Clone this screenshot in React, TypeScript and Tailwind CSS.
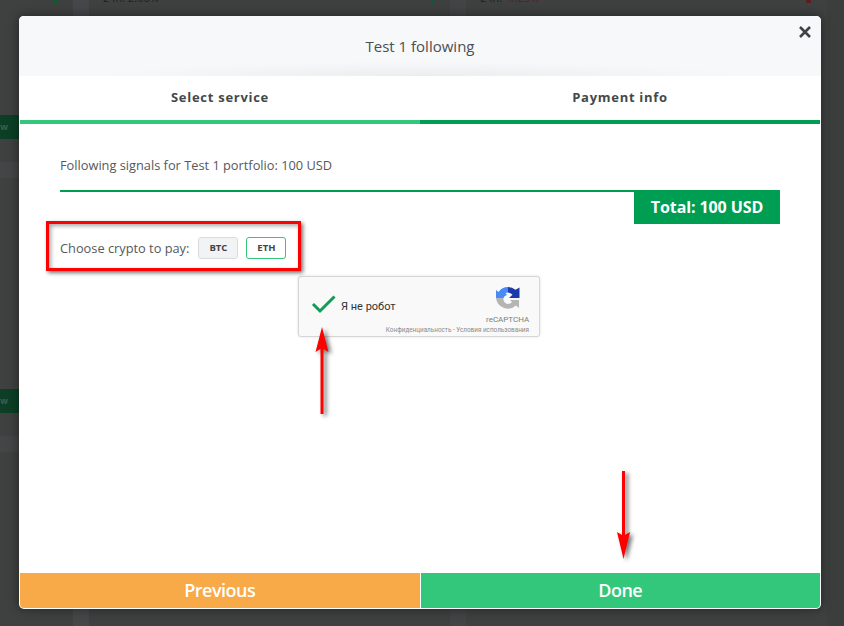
export default function App() {
  const font = { fontFamily: '"Open Sans", sans-serif' };
  return (
    <div className="relative h-[626px] w-[844px] overflow-hidden bg-[#3f4040]" style={font}>
      {/* dimmed page behind the modal */}
      <div className="absolute inset-0">
        <div className="absolute right-0 top-0 h-full w-[17px] bg-[#3c3d3d]" />
        <div className="absolute left-[73px] top-0 h-[16px] w-[16px] bg-[#454748]" />
        <div className="absolute left-[73px] bottom-0 h-[17px] w-[16px] bg-[#454748]" />
        <div className="absolute left-[450px] top-0 h-[16px] w-[16px] bg-[#434445]" />
        <div className="absolute left-[450px] bottom-0 h-[17px] w-[16px] bg-[#434445]" />
        <div className="absolute left-[103px] top-[-10px] text-[11px] text-[#202121]">24h: 2.06%</div>
        <div className="absolute left-[480px] top-[-10px] text-[11px] text-[#202121]">24h: <span className="text-[#5a1f1f]">-0.25%</span></div>
        <div className="absolute left-[54px] top-0 h-[3px] w-[3px] bg-[#0f5a30]" />
        <div className="absolute left-[431px] top-0 h-[3px] w-[3px] bg-[#0f5a30]" />
        <div className="absolute left-[806px] top-0 h-[3px] w-[5px] bg-[#5a1f1f]" />
        <div className="absolute left-0 top-[115px] flex h-[24px] w-[19px] items-center justify-end bg-[#0c3f25] pr-[11px] text-[9px] font-bold text-[#3f5f52]">w</div>
        <div className="absolute left-0 top-[389px] flex h-[24px] w-[19px] items-center justify-end bg-[#0c3f25] pr-[11px] text-[9px] font-bold text-[#3f5f52]">w</div>
        <div className="absolute left-0 top-[162px] h-[16px] w-[19px] bg-[#434546]" />
        <div className="absolute left-0 top-[436px] h-[16px] w-[19px] bg-[#434546]" />
      </div>

      {/* modal */}
      <div className="absolute left-[19px] top-[16px] flex h-[593px] w-[802px] flex-col overflow-hidden rounded-[5px] bg-white shadow-[0_0_12px_rgba(0,0,0,0.45)]">
        <div className="relative flex h-[60px] shrink-0 items-center justify-center bg-[#f7f8fa] bg-[radial-gradient(ellipse_320px_14px_at_50%_100%,#eceded,#f7f8fa)] text-[15px] text-[#4a4f52]">
          Test 1 following
          <svg className="absolute right-[9px] top-[9px]" width="14" height="14" viewBox="0 0 14 14">
            <path d="M2 2 L12 12 M12 2 L2 12" stroke="#3d4345" strokeWidth="2.6" />
          </svg>
        </div>

        <div className="flex h-[48px] shrink-0 pl-px pr-px">
          <div className="flex flex-1 flex-col">
            <div className="flex flex-1 items-center justify-center text-[13px] font-bold tracking-[0.72px] text-[#43494b]">Select service</div>
            <div className="h-[4px] bg-[#32c77b]" />
          </div>
          <div className="flex flex-1 flex-col">
            <div className="flex flex-1 items-center justify-center text-[13px] font-bold tracking-[0.72px] text-[#43494b]">Payment info</div>
            <div className="h-[4px] bg-[#009e52]" />
          </div>
        </div>

        <div className="flex min-h-0 flex-1 flex-col px-[41px]">
          <div className="mt-[32px] text-[12.8px] leading-[18px] text-[#55595c]">Following signals for Test 1 portfolio: 100 USD</div>
          <div className="mt-[16px] flex h-[34px] items-start justify-end border-t-2 border-[#009e52]">
            <div className="-mt-[2px] flex h-[34px] w-[146px] items-center justify-center bg-[#009e52] text-[16px] font-bold tracking-[-0.1px] text-white">Total: 100 USD</div>
          </div>
          <div className="mt-[12px] flex h-[24px] items-center">
            <span className="pt-[1px] text-[12.8px] text-[#55595c]">Choose crypto to pay:</span>
            <span className="ml-[9px] flex h-[22px] w-[40px] items-center justify-center rounded-[3px] border border-[#d9dbde] bg-[#f2f3f5] text-[9.5px] font-bold text-[#3f4548]">BTC</span>
            <span className="ml-[8px] flex h-[22px] w-[40px] items-center justify-center rounded-[3px] border border-[#32c77b] bg-white text-[9.5px] font-bold text-[#3f4548]">ETH</span>
          </div>
          <div className="relative ml-[238px] mt-[16px] h-[61px] w-[242px] rounded-[3px] border border-[#d6d6d6] bg-[#f9f9f9] shadow-[0_0_3px_rgba(0,0,0,0.12)]" style={{ fontFamily: 'Roboto, sans-serif' }}>
            <svg className="absolute left-[12px] top-[17px]" width="26" height="20" viewBox="0 0 26 20">
              <path d="M2 10 L9 17 L23.5 2.5" fill="none" stroke="#0f9d58" strokeWidth="3" />
            </svg>
            <span className="absolute left-[42px] top-[23px] text-[11px] leading-[14px] text-[#333]">Я не робот</span>
            <svg className="absolute left-[196px] top-[9px]" width="26" height="25" viewBox="0 0 26 25">
              <path d="M1 12 L1 4 L3.5 6 A12 12 0 0 1 13 1 L13 6.5 L10.5 7 L12 9 A4.5 4.5 0 0 0 8.5 12 Z" fill="#4a8af4" />
              <path d="M13 1 A12 12 0 0 1 20.5 3.8 L24.5 1.5 L24.5 12 L14 12 L17.5 8.8 A6 6 0 0 0 13 6.5 Z" fill="#1c3aa9" />
              <path d="M1 12 L8.5 12 A5 5 0 0 0 13 18 A5 5 0 0 0 17 16 L15 14 L24 14 L24 22 L21 19.5 A12 12 0 0 1 1 12 Z" fill="#b5b5b5" />
            </svg>
            <span className="absolute left-[187px] top-[37px] text-[8px] leading-[11px] text-[#7d7d7d]">reCAPTCHA</span>
            <span className="absolute right-[10px] top-[49px] whitespace-nowrap text-[6.35px] leading-[8px] text-[#8b8b8b]">Конфиденциальность - Условия использования</span>
          </div>
        </div>

        <div className="mb-px flex h-[35px] shrink-0 gap-px px-px">
          <div className="flex flex-1 items-center justify-center rounded-bl-[4px] bg-[#f8aa49] text-[18px] font-semibold tracking-[-0.5px] text-white">Previous</div>
          <div className="flex flex-1 items-center justify-center rounded-br-[4px] bg-[#32c77b] text-[18px] font-semibold tracking-[-0.5px] text-white">Done</div>
        </div>
      </div>

      {/* red annotations */}
      <div className="absolute left-[46px] top-[221px] h-[50px] w-[255px] border-[3px] border-[#ff0000] shadow-[2px_2px_4px_rgba(0,0,0,0.55),inset_2px_2px_4px_rgba(0,0,0,0.35)]" />
      <svg className="absolute left-[309px] top-[325px] drop-shadow-[3px_2px_2px_rgba(0,0,0,0.55)]" width="28" height="92" viewBox="0 0 28 92">
        <path d="M13 2 L19.5 27 L14.5 24 L14.5 89 L11.5 89 L11.5 24 L6.5 27 Z" fill="#ff0000" />
      </svg>
      <svg className="absolute left-[610px] top-[469px] drop-shadow-[3px_2px_2px_rgba(0,0,0,0.55)]" width="28" height="92" viewBox="0 0 28 92">
        <path d="M13.5 90 L7 63 L12 66 L12 2 L15 2 L15 66 L20 63 Z" fill="#ff0000" />
      </svg>
    </div>
  );
}
